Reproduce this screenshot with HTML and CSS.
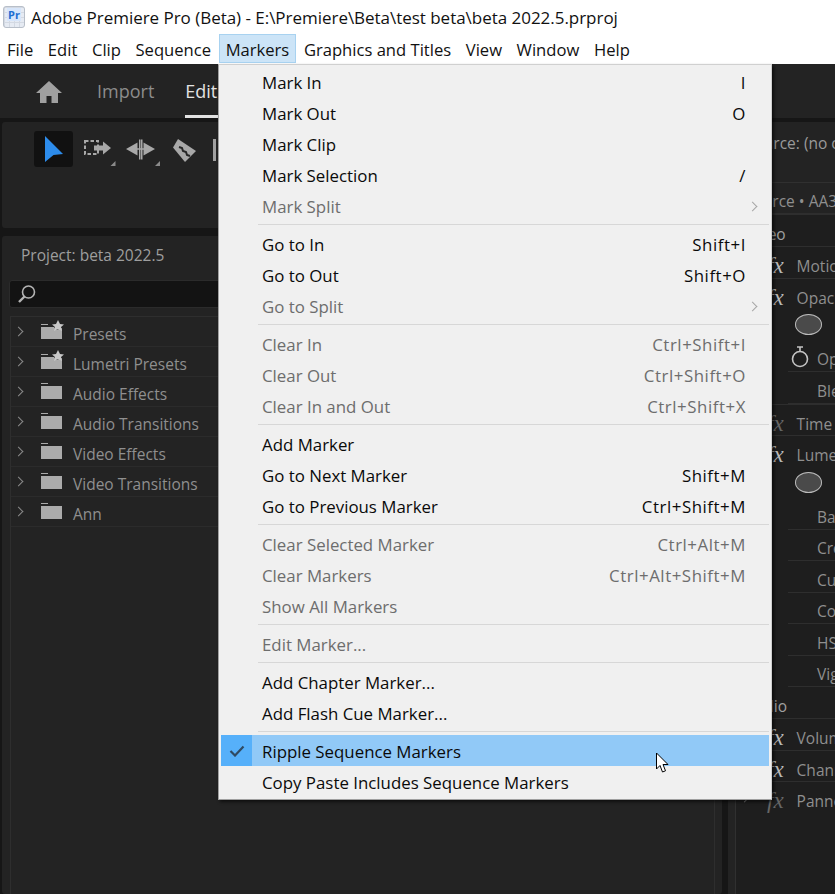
FILE: index.html
```html
<!DOCTYPE html>
<html>
  <head>
    <title>Adobe Premiere Pro (Beta)</title>
    <link rel="stylesheet" href="styles.css">
  </head>
  <body>
    <div class="titlebar">
      <div class="app-icon"><span>Pr</span></div>
      <div class="title-text">Adobe Premiere Pro (Beta) - E:\Premiere\Beta\test beta\beta 2022.5.prproj</div>
    </div>

    <div class="menubar">
      <div class="menubar-item">File</div>
      <div class="menubar-item">Edit</div>
      <div class="menubar-item">Clip</div>
      <div class="menubar-item">Sequence</div>
      <div class="menubar-item open">Markers</div>
      <div class="menubar-item">Graphics and Titles</div>
      <div class="menubar-item">View</div>
      <div class="menubar-item">Window</div>
      <div class="menubar-item">Help</div>
    </div>

    <div class="app">
      <div class="header-bar">
        <svg class="home-icon" width="28" height="24" viewBox="0 0 28 24">
          <path fill="#a0a0a0" d="M14 1 L27 13 L23 13 L23 23 L16.5 23 L16.5 16 L11.5 16 L11.5 23 L5 23 L5 13 L1 13 Z"/>
        </svg>
        <div class="header-tab">Import</div>
        <div class="header-tab active">Edit</div>
      </div>

      <div class="workspace">
        <div class="left-column">
          <div class="tools-panel">
            <div class="tool-selected">
              <svg width="18" height="26" viewBox="0 0 18 26"><path fill="#2d8ceb" d="M0 0 L18 18 L8.5 19 L0 26 Z"/></svg>
            </div>
            <svg class="tool marquee" width="33" height="28" viewBox="0 0 33 28">
              <rect x="1" y="2" width="13" height="13" fill="none" stroke="#a8a8a8" stroke-width="2" stroke-dasharray="3.5 2"/>
              <path fill="#a8a8a8" d="M10 6.5 H19 V2.5 L27 9 L19 15.5 V11.5 H10 Z"/>
              <path fill="#8a8a8a" d="M26.5 27 L31.5 27 L31.5 22 Z"/>
            </svg>
            <svg class="tool ripple" width="36" height="28" viewBox="0 0 36 28">
              <path fill="#a8a8a8" d="M0 10 L11.5 3.5 V16.5 Z M29 10 L17.5 3.5 V16.5 Z"/>
              <path fill="#a8a8a8" d="M13 0.5 H14.5 V20.5 H13 Z M15 0.5 H16.5 V20.5 H15 Z M11 9.2 H18 V10.8 H11 Z"/>
              <path fill="#8a8a8a" d="M29 27 L34 27 L34 22 Z"/>
            </svg>
            <svg class="tool razor" width="26" height="26" viewBox="0 0 26 26">
              <path fill="#a8a8a8" d="M6 1 L24 13 L13 24 L1 9.5 Z"/>
              <path fill="none" stroke="#262626" stroke-width="2" d="M7 9 L10 10 L11 13 L14 14 L15 17 L18 18"/>
            </svg>
            <div class="tool-bar"></div>
          </div>

          <div class="project-panel">
            <div class="panel-title">Project: beta 2022.5</div>
            <div class="search-field">
              <svg width="20" height="20" viewBox="0 0 20 20">
                <circle cx="11.5" cy="8" r="6" fill="none" stroke="#b4b4b4" stroke-width="1.6"/>
                <path stroke="#b4b4b4" stroke-width="2.4" d="M7.5 12.5 L2 18"/>
              </svg>
            </div>
            <div class="tree">
              <div class="tree-row">
                <span class="chevron"></span>
                <svg class="folder" width="24" height="22" viewBox="0 0 24 22">
                  <path fill="#ababab" d="M1 5 H8 V6 H1 Z M1 8 H14 L16 11 L22 9 V20 H1 Z"/>
                  <path fill="#c8c8c8" d="M18 1 L20 5 L24 5.5 L21 8 L22 12 L18 10 L14 12 L15 8 L12 5.5 L16 5 Z"/>
                </svg>
                <span class="tree-label">Presets</span>
              </div>
              <div class="tree-row">
                <span class="chevron"></span>
                <svg class="folder" width="24" height="22" viewBox="0 0 24 22">
                  <path fill="#ababab" d="M1 5 H8 V6 H1 Z M1 8 H14 L16 11 L22 9 V20 H1 Z"/>
                  <path fill="#c8c8c8" d="M18 1 L20 5 L24 5.5 L21 8 L22 12 L18 10 L14 12 L15 8 L12 5.5 L16 5 Z"/>
                </svg>
                <span class="tree-label">Lumetri Presets</span>
              </div>
              <div class="tree-row">
                <span class="chevron"></span>
                <svg class="folder" width="24" height="22" viewBox="0 0 24 22"><path fill="#ababab" d="M1 4 H8 V5 H1 Z M1 7 H22 V20 H1 Z"/></svg>
                <span class="tree-label">Audio Effects</span>
              </div>
              <div class="tree-row">
                <span class="chevron"></span>
                <svg class="folder" width="24" height="22" viewBox="0 0 24 22"><path fill="#ababab" d="M1 4 H8 V5 H1 Z M1 7 H22 V20 H1 Z"/></svg>
                <span class="tree-label">Audio Transitions</span>
              </div>
              <div class="tree-row">
                <span class="chevron"></span>
                <svg class="folder" width="24" height="22" viewBox="0 0 24 22"><path fill="#ababab" d="M1 4 H8 V5 H1 Z M1 7 H22 V20 H1 Z"/></svg>
                <span class="tree-label">Video Effects</span>
              </div>
              <div class="tree-row">
                <span class="chevron"></span>
                <svg class="folder" width="24" height="22" viewBox="0 0 24 22"><path fill="#ababab" d="M1 4 H8 V5 H1 Z M1 7 H22 V20 H1 Z"/></svg>
                <span class="tree-label">Video Transitions</span>
              </div>
              <div class="tree-row">
                <span class="chevron"></span>
                <svg class="folder" width="24" height="22" viewBox="0 0 24 22"><path fill="#ababab" d="M1 4 H8 V5 H1 Z M1 7 H22 V20 H1 Z"/></svg>
                <span class="tree-label">Ann</span>
              </div>
            </div>
          </div>
        </div>

        <div class="right-column">
          <div class="fx-panel">
            <div class="fx-title">Source: (no clips)</div>
            <div class="fx-source">Source • AA3</div>
            <div class="fx-section">Video</div>
            <div class="fx-row"><span class="fx">fx</span>Motion</div>
            <div class="fx-row"><span class="fx">fx</span>Opacity</div>
            <div class="fx-sub tall"><span class="mask-oval"></span></div>
            <div class="fx-sub">
              <svg class="stopwatch" width="20" height="24" viewBox="0 0 20 24">
                <circle cx="10" cy="14" r="7.5" fill="none" stroke="#c4c4c4" stroke-width="1.6"/>
                <path fill="none" stroke="#c4c4c4" stroke-width="1.6" d="M7 2 H13 M10 2 V6"/>
              </svg>
              <span class="fx-sub-label">Opacity</span>
            </div>
            <div class="fx-sub"><span class="fx-sub-label">Blend Mode</span></div>
            <div class="fx-row"><span class="fx dim">fx</span>Time Remapping</div>
            <div class="fx-row"><span class="fx">fx</span>Lumetri Color</div>
            <div class="fx-sub tall"><span class="mask-oval"></span></div>
            <div class="fx-sub"><span class="fx-sub-label">Basic</span></div>
            <div class="fx-sub"><span class="fx-sub-label">Creative</span></div>
            <div class="fx-sub"><span class="fx-sub-label">Curves</span></div>
            <div class="fx-sub"><span class="fx-sub-label">Color</span></div>
            <div class="fx-sub"><span class="fx-sub-label">HSL</span></div>
            <div class="fx-sub"><span class="fx-sub-label">Vignette</span></div>
            <div class="fx-section">Audio</div>
            <div class="fx-row"><span class="fx">fx</span>Volume</div>
            <div class="fx-row"><span class="fx">fx</span>Channel</div>
            <div class="fx-row"><span class="fx-chevron"></span><span class="fx dim">fx</span>Panner</div>
          </div>
        </div>
      </div>
    </div>

    <div class="menu">
      <div class="menu-item"><span>Mark In</span><span class="shortcut">I</span></div>
      <div class="menu-item"><span>Mark Out</span><span class="shortcut">O</span></div>
      <div class="menu-item"><span>Mark Clip</span></div>
      <div class="menu-item"><span>Mark Selection</span><span class="shortcut">/</span></div>
      <div class="menu-item disabled"><span>Mark Split</span><span class="submenu-arrow"></span></div>
      <div class="menu-sep"></div>
      <div class="menu-item"><span>Go to In</span><span class="shortcut">Shift+I</span></div>
      <div class="menu-item"><span>Go to Out</span><span class="shortcut">Shift+O</span></div>
      <div class="menu-item disabled"><span>Go to Split</span><span class="submenu-arrow"></span></div>
      <div class="menu-sep"></div>
      <div class="menu-item disabled"><span>Clear In</span><span class="shortcut">Ctrl+Shift+I</span></div>
      <div class="menu-item disabled"><span>Clear Out</span><span class="shortcut">Ctrl+Shift+O</span></div>
      <div class="menu-item disabled"><span>Clear In and Out</span><span class="shortcut">Ctrl+Shift+X</span></div>
      <div class="menu-sep"></div>
      <div class="menu-item"><span>Add Marker</span></div>
      <div class="menu-item"><span>Go to Next Marker</span><span class="shortcut">Shift+M</span></div>
      <div class="menu-item"><span>Go to Previous Marker</span><span class="shortcut">Ctrl+Shift+M</span></div>
      <div class="menu-sep"></div>
      <div class="menu-item disabled"><span>Clear Selected Marker</span><span class="shortcut">Ctrl+Alt+M</span></div>
      <div class="menu-item disabled"><span>Clear Markers</span><span class="shortcut">Ctrl+Alt+Shift+M</span></div>
      <div class="menu-item disabled"><span>Show All Markers</span></div>
      <div class="menu-sep"></div>
      <div class="menu-item disabled"><span>Edit Marker...</span></div>
      <div class="menu-sep"></div>
      <div class="menu-item"><span>Add Chapter Marker...</span></div>
      <div class="menu-item"><span>Add Flash Cue Marker...</span></div>
      <div class="menu-sep"></div>
      <div class="menu-item highlighted">
        <span class="check-box">
          <svg width="16" height="12" viewBox="0 0 16 12"><path fill="none" stroke="#2f4a63" stroke-width="2.2" d="M1.5 6 L6 10.5 L14.5 1.5"/></svg>
        </span>
        <span>Ripple Sequence Markers</span>
      </div>
      <div class="menu-item"><span>Copy Paste Includes Sequence Markers</span></div>
    </div>

    <svg class="cursor" width="14" height="22" viewBox="0 0 14 22">
      <path fill="#fff" stroke="#000" stroke-width="1" d="M1.5 1 V17 L5 13.5 L7.5 20 L10.5 18.8 L8 12.5 L13 12.5 Z"/>
    </svg>
  </body>
</html>
```

FILE: styles.css
```css
html, body {
  margin: 0;
  padding: 0;
}

body {
  width: 835px;
  height: 894px;
  overflow: hidden;
  position: relative;
  display: flex;
  flex-direction: column;
  background-color: #232323;
  font-family: "Open Sans", "Noto Sans", sans-serif;
}

.titlebar {
  height: 34px;
  flex-shrink: 0;
  display: flex;
  align-items: center;
  padding-left: 3px;
  background-color: #fff;
}

.app-icon {
  width: 22px;
  height: 22px;
  margin-right: 6px;
  border: 1px solid #b8bfc9;
  border-radius: 3px;
  box-sizing: border-box;
  background-color: #e6ebf3;
  background-image:
    linear-gradient(#d3d9e3 1px, transparent 1px),
    linear-gradient(90deg, #d3d9e3 1px, transparent 1px);
  background-size: 5px 5px;
  display: flex;
  justify-content: center;
}

.app-icon span {
  align-self: flex-start;
  margin-top: 1px;
  padding: 0 1px;
  height: 13px;
  line-height: 13px;
  font-size: 11px;
  font-weight: bold;
  color: #1d6fd1;
  background-color: #d7e6fb;
}

.title-text {
  font-size: 17px;
  letter-spacing: -0.03px;
  color: #111;
  white-space: nowrap;
}

.menubar {
  height: 30px;
  flex-shrink: 0;
  display: flex;
  background-color: #fff;
}

.menubar-item {
  height: 29px;
  line-height: 30px;
  padding: 0 6px;
  margin-right: 0.6px;
  font-size: 16.6px;
  color: #111;
  box-sizing: border-box;
  border: 1px solid transparent;
  white-space: nowrap;
}

.menubar-item.open {
  background-color: #cce4f7;
  border-color: #a8d2f0;
}

.app {
  flex: 1;
  display: flex;
  flex-direction: column;
  min-height: 0;
  background-color: #161616;
}

.header-bar {
  height: 54px;
  flex-shrink: 0;
  display: flex;
  align-items: center;
  background-color: #232323;
  padding-left: 35px;
}

.home-icon {
  margin: 2px 34px 0 0;
}

.header-tab {
  height: 54px;
  line-height: 54px;
  margin-right: 31px;
  font-size: 18px;
  color: #8c8c8c;
  box-sizing: border-box;
}

.header-tab.active {
  color: #e2e2e2;
  border-bottom: 3px solid #e2e2e2;
  padding-right: 30px;
}

.workspace {
  flex: 1;
  display: flex;
  min-height: 0;
  padding: 4px 0 0 2px;
}

.left-column {
  width: 720px;
  flex-shrink: 0;
  display: flex;
  flex-direction: column;
  gap: 8px;
}

.tools-panel {
  height: 106px;
  flex-shrink: 0;
  box-sizing: border-box;
  padding: 9px 0 0 32px;
  display: flex;
  align-items: flex-start;
  background-color: #232323;
  border-radius: 3px;
}

.tool-selected {
  width: 39px;
  height: 36px;
  background-color: #111;
  border-radius: 3px;
  display: flex;
  align-items: center;
  justify-content: center;
}

.tool {
  margin-top: 8px;
}

.tool.marquee {
  margin-left: 11px;
}

.tool.ripple {
  margin-left: 9px;
}

.tool.razor {
  margin: 7px 0 0 10px;
}

.tool-bar {
  width: 3px;
  height: 22px;
  margin: 8px 0 0 15px;
  background-color: #a0a0a0;
}

.project-panel {
  flex: 1;
  min-height: 0;
  background-color: #232323;
  border-radius: 3px;
  padding: 0 7px;
  overflow: hidden;
}

.panel-title {
  height: 44px;
  line-height: 38px;
  padding-left: 12px;
  font-size: 15.5px;
  color: #9e9e9e;
}

.search-field {
  height: 28px;
  display: flex;
  align-items: center;
  padding-left: 7px;
  background-color: #131313;
  border: 1px solid #2b2b2b;
  border-radius: 3px;
  box-sizing: border-box;
}

.tree {
  margin: 8px 0 0 1px;
  border-left: 1px solid #2e2e2e;
  border-right: 1px solid #2e2e2e;
  border-top: 1px solid #2e2e2e;
  height: 600px;
}

.tree-row {
  height: 30px;
  box-sizing: border-box;
  display: flex;
  align-items: center;
  border-bottom: 1px solid #2b2b2b;
  font-size: 15.5px;
  color: #8f8f8f;
}

.chevron {
  width: 7px;
  height: 7px;
  margin-left: 4px;
  border-top: 1.5px solid #8a8a8a;
  border-right: 1.5px solid #8a8a8a;
  transform: rotate(45deg);
  box-sizing: border-box;
}

.folder {
  margin: -4px 0 0 18px;
}

.tree-label {
  margin-left: 9px;
  padding-top: 5px;
}

.right-column {
  flex: 1;
  min-width: 0;
  margin-left: 6px;
  padding-left: 7px;
  background-color: #232323;
}

.fx-panel {
  height: 100%;
  background-color: #1e1e1e;
  border-left: 1px solid #303030;
  box-sizing: border-box;
  font-size: 15.5px;
  color: #8f8f8f;
  white-space: nowrap;
  overflow: hidden;
}

.fx-title {
  height: 61px;
  line-height: 42px;
  padding-left: 10px;
  background-color: #232323;
  border-bottom: 1px solid #303030;
  box-sizing: border-box;
  color: #9a9a9a;
}

.fx-source {
  height: 32px;
  line-height: 37px;
  padding-left: 9px;
  background-color: #232323;
  border-bottom: 2px solid #2e2e2e;
  box-sizing: border-box;
}

.fx-section {
  height: 31px;
  line-height: 38px;
  padding-left: 9px;
  color: #a0a0a0;
}

.fx-row {
  position: relative;
  height: 31.5px;
  box-sizing: border-box;
  line-height: 38px;
  border-top: 1px solid #2e2e2e;
  display: flex;
  padding-left: 31px;
}

.fx-chevron {
  position: absolute;
  left: 5px;
  top: 12px;
  width: 7px;
  height: 7px;
  border-top: 1px solid #777;
  border-right: 1px solid #777;
  transform: rotate(45deg);
  box-sizing: border-box;
}

.fx {
  font-family: "Liberation Serif", serif;
  font-style: italic;
  font-size: 23px;
  line-height: 38px;
  margin-right: 13px;
  color: #b8b8b8;
}

.fx.dim {
  color: #666;
}

.fx-sub {
  position: relative;
  height: 31.5px;
  box-sizing: border-box;
  border-bottom: 1px solid #2e2e2e;
  margin-left: 52px;
  display: flex;
  align-items: center;
}

.fx-sub-label {
  margin-left: 29px;
  padding-top: 7px;
}

.fx-sub.tall {
  border-bottom: none;
  margin-left: 36px;
}

.mask-oval {
  margin-left: 23px;
  width: 27px;
  height: 21px;
  border-radius: 50%;
  box-sizing: border-box;
  background-color: #4a4a4a;
  border: 1px solid #bcbcbc;
}

.stopwatch {
  position: absolute;
  left: 2px;
  top: 4px;
}

.menu {
  position: absolute;
  left: 218px;
  top: 64px;
  width: 554px;
  height: 736px;
  box-sizing: border-box;
  padding: 1px 2px 0;
  background-color: #f0f0f0;
  border: 1px solid #a0a0a0;
  border-top-color: #d0d0d0;
  border-right-color: #cfcfcf;
  box-shadow: 2px 2px 3px rgba(0, 0, 0, 0.6);
}

.menu-item {
  position: relative;
  height: 31px;
  box-sizing: border-box;
  display: flex;
  justify-content: space-between;
  align-items: center;
  padding: 1px 23px 0 41px;
  font-size: 16.85px;
  color: #0a0a0a;
  white-space: nowrap;
}

.menu-item.disabled {
  color: #6d6d6d;
}

.menu-item.highlighted {
  justify-content: flex-start;
  background-color: #91c9f7;
}

.shortcut {
  letter-spacing: 0.55px;
}

.menu-sep {
  height: 1px;
  margin: 3px 0 3px 37px;
  background-color: #d7d7d7;
}

.submenu-arrow {
  width: 7px;
  height: 7px;
  margin-right: -10px;
  border-top: 1px solid #a6a6a6;
  border-right: 1px solid #a6a6a6;
  transform: rotate(45deg);
  box-sizing: border-box;
}

.check-box {
  position: absolute;
  left: 0;
  top: 0;
  width: 31px;
  height: 31px;
  display: flex;
  align-items: center;
  justify-content: center;
  background-color: #56b0fa;
}

.cursor {
  position: absolute;
  left: 655px;
  top: 752px;
}
```
